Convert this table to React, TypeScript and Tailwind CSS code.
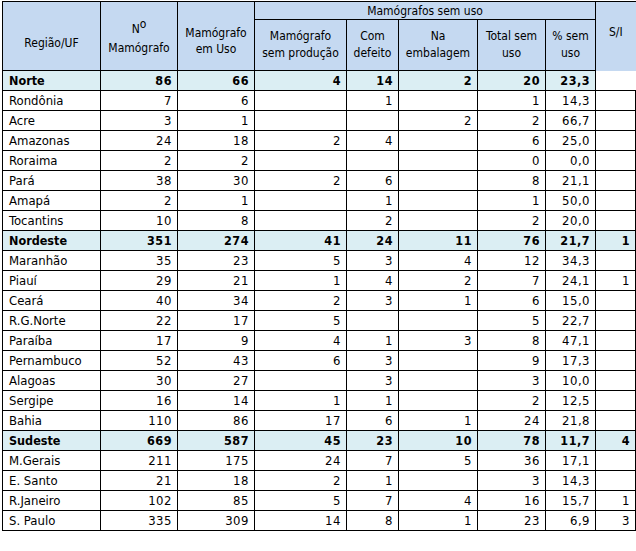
import React from 'react';

type Row = { name: string; region?: boolean; v: string[] };

const rows: Row[] = [
  { name: 'Norte', region: true, v: ['86', '66', '4', '14', '2', '20', '23,3', ''] },
  { name: 'Rondônia', v: ['7', '6', '', '1', '', '1', '14,3', ''] },
  { name: 'Acre', v: ['3', '1', '', '', '2', '2', '66,7', ''] },
  { name: 'Amazonas', v: ['24', '18', '2', '4', '', '6', '25,0', ''] },
  { name: 'Roraima', v: ['2', '2', '', '', '', '0', '0,0', ''] },
  { name: 'Pará', v: ['38', '30', '2', '6', '', '8', '21,1', ''] },
  { name: 'Amapá', v: ['2', '1', '', '1', '', '1', '50,0', ''] },
  { name: 'Tocantins', v: ['10', '8', '', '2', '', '2', '20,0', ''] },
  { name: 'Nordeste', region: true, v: ['351', '274', '41', '24', '11', '76', '21,7', '1'] },
  { name: 'Maranhão', v: ['35', '23', '5', '3', '4', '12', '34,3', ''] },
  { name: 'Piauí', v: ['29', '21', '1', '4', '2', '7', '24,1', '1'] },
  { name: 'Ceará', v: ['40', '34', '2', '3', '1', '6', '15,0', ''] },
  { name: 'R.G.Norte', v: ['22', '17', '5', '', '', '5', '22,7', ''] },
  { name: 'Paraíba', v: ['17', '9', '4', '1', '3', '8', '47,1', ''] },
  { name: 'Pernambuco', v: ['52', '43', '6', '3', '', '9', '17,3', ''] },
  { name: 'Alagoas', v: ['30', '27', '', '3', '', '3', '10,0', ''] },
  { name: 'Sergipe', v: ['16', '14', '1', '1', '', '2', '12,5', ''] },
  { name: 'Bahia', v: ['110', '86', '17', '6', '1', '24', '21,8', ''] },
  { name: 'Sudeste', region: true, v: ['669', '587', '45', '23', '10', '78', '11,7', '4'] },
  { name: 'M.Gerais', v: ['211', '175', '24', '7', '5', '36', '17,1', ''] },
  { name: 'E. Santo', v: ['21', '18', '2', '1', '', '3', '14,3', ''] },
  { name: 'R.Janeiro', v: ['102', '85', '5', '7', '4', '16', '15,7', '1'] },
  { name: 'S. Paulo', v: ['335', '309', '14', '8', '1', '23', '6,9', '3'] },
];

const widths = [98, 77, 77, 92, 52, 79, 68, 50, 40];

export default function App() {
  return (
    <div className="w-[636px] h-[551px] bg-white pt-[1px] pl-[2px] font-['DejaVu_Sans_Condensed','DejaVu_Sans',sans-serif] text-black">
      <table className="table-fixed border-collapse w-[633px]">
        <colgroup>
          {widths.map((w, i) => (
            <col key={i} style={{ width: w }} />
          ))}
        </colgroup>
        <thead>
          <tr className="h-[18px] bg-[#c5d9f1] text-[12px]">
            <th rowSpan={2} className="border border-black font-normal align-middle pt-[14px]">Região/UF</th>
            <th rowSpan={2} className="border border-black font-normal leading-[19px] pt-[6px]">
              N<sup className="text-[12px] top-[-5px]">o</sup>
              <br />
              Mamógrafo
            </th>
            <th rowSpan={2} className="border border-black font-normal leading-[16px] pt-[10px]">
              Mamógrafo
              <br />
              em Uso
            </th>
            <th colSpan={5} className="border border-black font-normal leading-[16px]">Mamógrafos sem uso</th>
            <th rowSpan={2} className="border-t border-black font-normal align-middle pb-[8px]">S/I</th>
          </tr>
          <tr className="h-[51px] bg-[#c5d9f1] text-[12px] leading-[17px]">
            <th className="border border-black font-normal">
              Mamógrafo
              <br />
              sem produção
            </th>
            <th className="border border-black font-normal">
              Com
              <br />
              defeito
            </th>
            <th className="border border-black font-normal">
              Na
              <br />
              embalagem
            </th>
            <th className="border border-black font-normal">
              Total sem
              <br />
              uso
            </th>
            <th className="border border-black font-normal">
              % sem
              <br />
              uso
            </th>
          </tr>
        </thead>
        <tbody>
          {rows.map((r, ri) => (
            <tr
              key={r.name}
              className={`h-[20px] leading-[18px] ${r.region ? 'bg-[#dbeef3] font-bold text-[12.5px]' : 'bg-white text-[13px]'}`}
            >
              <td className="border border-black pl-[6px] pr-0 text-left">{r.name}</td>
              {r.v.map((val, i) => {
                const last = i === r.v.length - 1;
                const noBorder = last && ri === 0;
                return (
                  <td
                    key={i}
                    className={`px-[5px] text-right tracking-[0.5px] ${
                      noBorder ? 'bg-white' : 'border border-black'
                    }`}
                  >
                    {val}
                  </td>
                );
              })}
            </tr>
          ))}
        </tbody>
      </table>
    </div>
  );
}
